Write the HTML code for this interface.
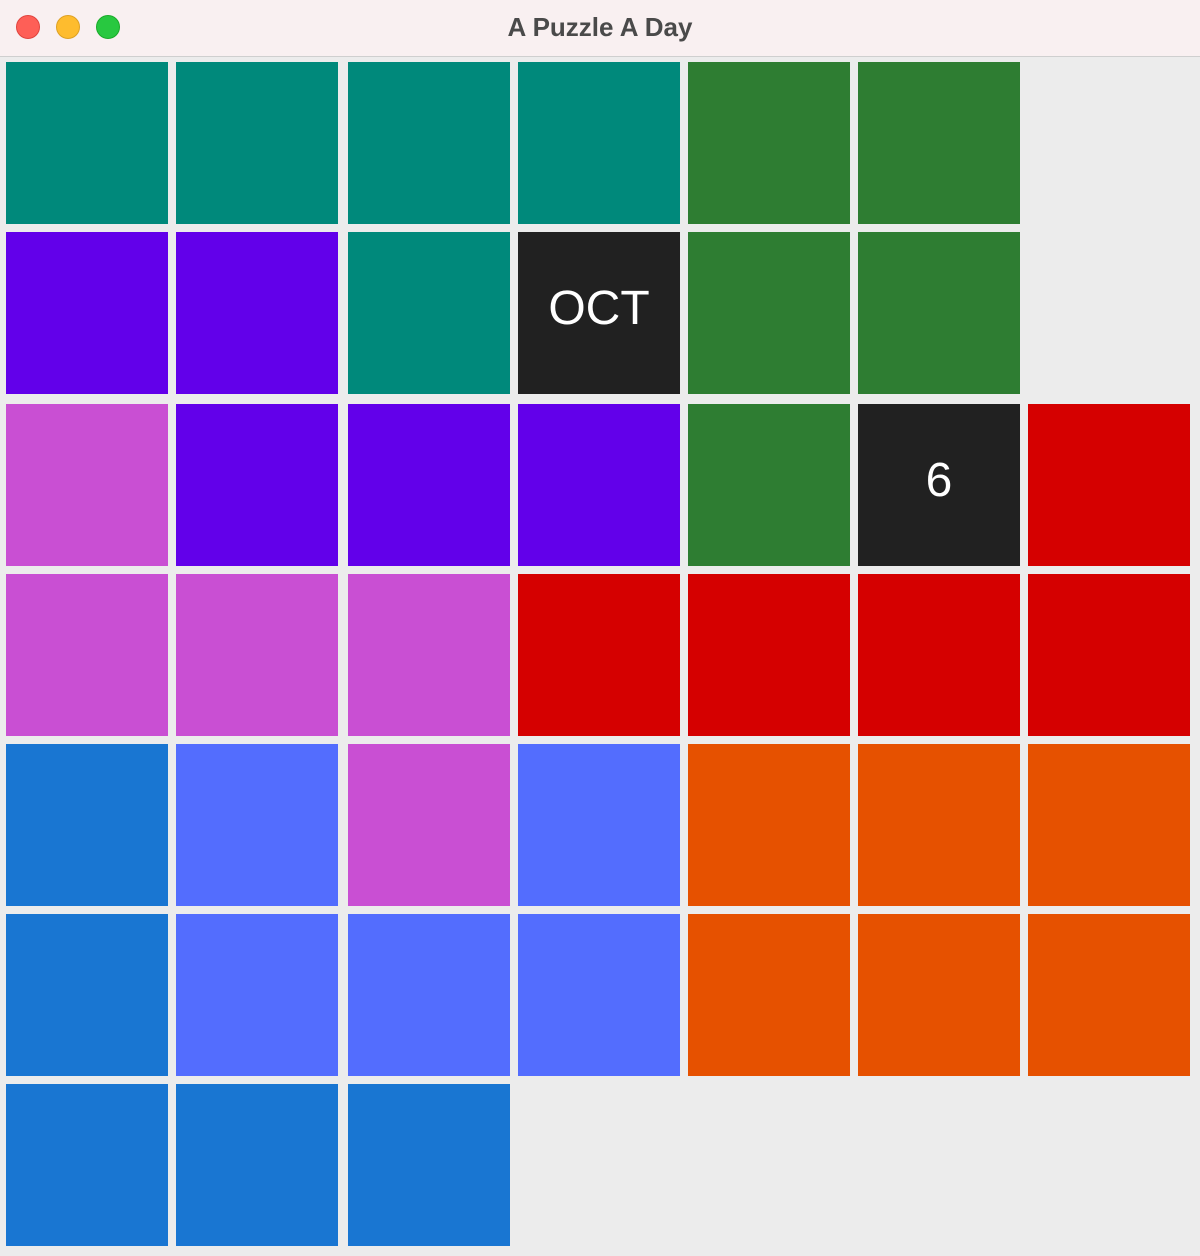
<!DOCTYPE html>
<html><head><style>
html,body{margin:0;padding:0;width:1200px;height:1256px;overflow:hidden;background:#ececec;font-family:"Liberation Sans",sans-serif}
.tb{position:absolute;left:0;top:0;width:1200px;height:56px;background:#f9f0f1;border-bottom:1px solid #cfcfcf}
.tb h1{margin:0;position:absolute;left:0;right:0;top:12px;text-align:center;font-size:26px;font-weight:bold;color:#4a4a4a}
.d{position:absolute;top:15px;width:24px;height:24px;border-radius:50%}
.c{position:absolute;width:162px;height:162px;color:#fff;font-size:48px;display:flex;align-items:center;justify-content:center}
.c span{position:relative;top:-5px}
</style></head><body>
<div class="tb"><div class="d" style="left:16px;background:#fe5f57;border:1px solid #e0443e;box-sizing:border-box"></div><div class="d" style="left:56px;background:#febc2e;border:1px solid #dea123;box-sizing:border-box"></div><div class="d" style="left:96px;background:#28c840;border:1px solid #1aab29;box-sizing:border-box"></div><h1>A Puzzle A Day</h1></div>
<div id="g"></div>
<script>
var cols=[6,176,348,518,688,858,1028],rows=[62,232,404,574,744,914,1084];
var col={T:'#00897b',G:'#2e7d32',P:'#6200ea',D:'#212121',M:'#c94fd3',R:'#d50000',B:'#1976d2',L:'#536dfe',O:'#e65100'};
var g=["TTTTGG_","PPTDGG_","MPPPGDR","MMMRRRR","BLMLOOO","BLLLOOO","BBB____"];
var h='';
for(var r=0;r<7;r++)for(var c=0;c<7;c++){var k=g[r][c];if(k=='_')continue;var t='';if(r==1&&c==3)t='OCT';if(r==2&&c==5)t='6';
h+='<div class="c" style="left:'+cols[c]+'px;top:'+rows[r]+'px;background:'+col[k]+'"><span>'+t+'</span></div>';}
document.getElementById('g').innerHTML=h;
</script>
</body></html>
